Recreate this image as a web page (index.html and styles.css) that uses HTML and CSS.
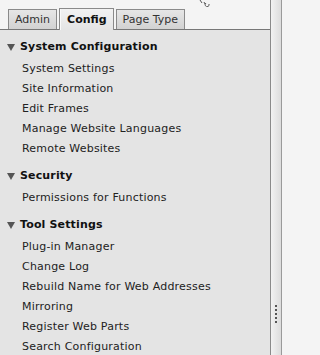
FILE: index.html
```html
<!DOCTYPE html>
<html>
<head>
<meta charset="utf-8">
<link rel="stylesheet" href="styles.css">
</head>
<body>
<div class="frame">
  <div class="main">
    <div class="tabbar">
      <div class="tab">Admin</div>
      <div class="tab active">Config</div>
      <div class="tab">Page Type</div>
      <svg class="cursor" width="12" height="7" viewBox="0 0 12 7"><path d="M1 0 L3 3 M5 2 L6 4 M7 3 a2 2 0 1 0 3 1" fill="none" stroke="#555" stroke-width="1"/></svg>
    </div>
    <div class="panel">
      <div class="section">
        <div class="heading"><span class="tri"></span>System Configuration</div>
        <div class="item">System Settings</div>
        <div class="item">Site Information</div>
        <div class="item">Edit Frames</div>
        <div class="item">Manage Website Languages</div>
        <div class="item">Remote Websites</div>
      </div>
      <div class="section">
        <div class="heading"><span class="tri"></span>Security</div>
        <div class="item">Permissions for Functions</div>
      </div>
      <div class="section">
        <div class="heading"><span class="tri"></span>Tool Settings</div>
        <div class="item">Plug-in Manager</div>
        <div class="item">Change Log</div>
        <div class="item">Rebuild Name for Web Addresses</div>
        <div class="item">Mirroring</div>
        <div class="item">Register Web Parts</div>
        <div class="item">Search Configuration</div>
      </div>
    </div>
  </div>
  <div class="splitter">
    <div class="grip"><i></i><i></i><i></i><i></i><i></i></div>
  </div>
</div>
</body>
</html>
```
FILE: styles.css
```css
html, body {
  margin: 0;
  padding: 0;
  height: 100%;
  overflow: hidden;
}
body {
  font-family: "DejaVu Sans", sans-serif;
  font-size: 11px;
  color: #222;
  background: #f4f4f4;
}
.frame {
  display: flex;
  height: 355px;
  overflow: hidden;
}
.main {
  width: 270px;
  flex-shrink: 0;
  display: flex;
  flex-direction: column;
  overflow: hidden;
}
.tabbar {
  height: 29px;
  flex-shrink: 0;
  background: #f4f4f4;
  display: flex;
  align-items: flex-end;
  gap: 2px;
  padding-left: 8px;
  position: relative;
}
.cursor {
  position: absolute;
  left: 199px;
  top: 0;
}
.tab {
  height: 19px;
  line-height: 19px;
  padding: 0 6px 0 6px;
  border: 1px solid #8a8a8a;
  border-bottom: none;
  background: linear-gradient(#e6e6e6, #d2d2d2);
  color: #333;
}
.tab.active {
  height: 21px;
  line-height: 22px;
  margin-bottom: -1px;
  background: linear-gradient(#f2f2f2, #e4e4e4);
  box-shadow: inset 1px 0 0 #fafafa;
  font-weight: bold;
  color: #111;
  padding: 0 6px 0 7px;
  position: relative;
  z-index: 1;
}
.panel {
  flex: 1;
  background: #e4e4e4;
  border-top: 1px solid #777;
  padding-top: 10px;
}
.section {
  margin-bottom: 7px;
}
.heading {
  font-weight: bold;
  color: #111;
  height: 20px;
  line-height: 14px;
  display: flex;
  align-items: flex-start;
  padding-left: 7px;
  letter-spacing: 0.15px;
  margin-bottom: 2px;
}
.tri {
  width: 0;
  height: 0;
  border-left: 4.5px solid transparent;
  border-right: 4.5px solid transparent;
  border-top: 7px solid #555;
  margin-top: 4px;
  margin-right: 5px;
}
.item {
  height: 20px;
  line-height: 14px;
  padding-left: 22px;
  color: #222;
  letter-spacing: 0.2px;
}
.splitter {
  width: 10px;
  flex-shrink: 0;
  border-left: 1px solid #8a8a8a;
  border-right: 1px solid #9a9a9a;
  background: linear-gradient(to right, #f2f2f2, #dcdcdc);
  display: flex;
  align-items: flex-start;
  justify-content: center;
}
.grip {
  margin-top: 305px;
  display: flex;
  flex-direction: column;
  gap: 2px;
}
.grip i {
  display: block;
  width: 2px;
  height: 2px;
  background: #555;
}
```
